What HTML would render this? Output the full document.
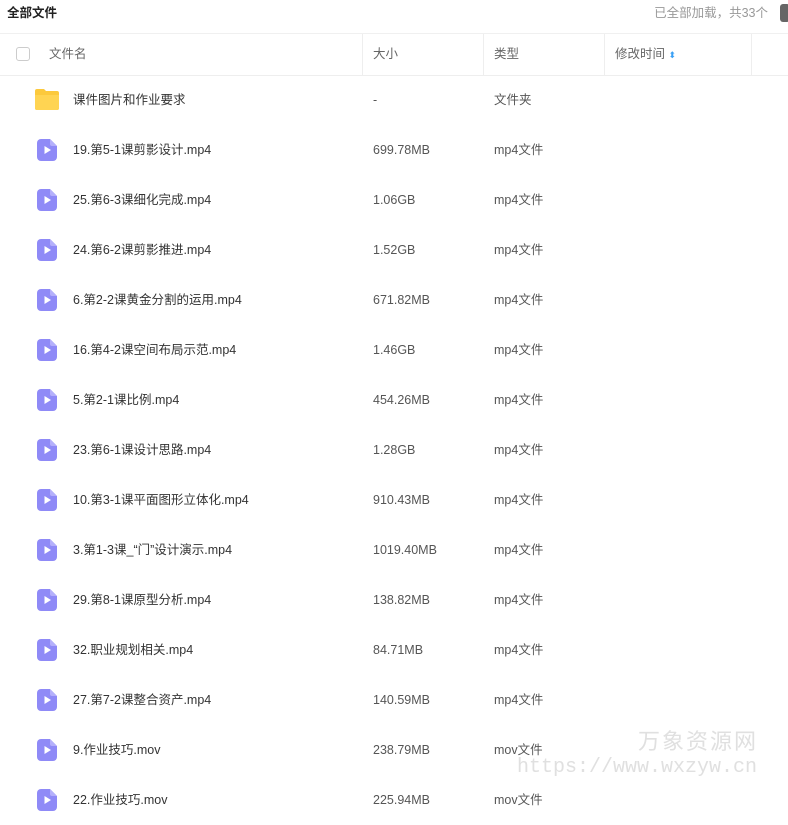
<!DOCTYPE html><html><head><meta charset="utf-8"><style>
body{margin:0;width:788px;height:802px;overflow:hidden;background:#fff;font-family:"Liberation Sans","Noto Sans CJK SC",sans-serif;font-size:12.5px;color:#333;position:relative}
.t{position:absolute;left:7px;top:0;line-height:27px;font-size:12.5px;font-weight:bold;color:#222}
.r{position:absolute;right:20px;top:0;line-height:27px;font-size:12.5px;color:#999}
.bar{position:absolute;left:780px;top:4px;width:10px;height:18px;background:#666;border-radius:3px}
.hd{position:absolute;left:0;top:33px;width:788px;height:41px;border-top:1px solid #f0f0f0;border-bottom:1px solid #eee}
.hd span{position:absolute;top:0;line-height:41px;color:#666}
.sep{position:absolute;top:0;width:1px;height:41px;background:#eee}
.cb{position:absolute;left:16px;top:13px;width:12px;height:12px;border:1px solid #ccc;border-radius:3px}
.row{position:absolute;left:0;width:788px;height:50px}
.row span{position:absolute;top:0;line-height:50px;color:#333}
.row span.g{color:#555}
.vi{position:absolute;left:37px;top:14px;width:20px;height:22px}
.wm1{position:absolute;left:638px;top:728px;font-size:22px;line-height:28px;color:#e0e0e0;letter-spacing:2px}
.wm2{position:absolute;left:517px;top:756px;font-size:20px;line-height:24px;color:#e0e0e0;font-family:"Liberation Mono",monospace}
</style></head><body>
<div class="t">全部文件</div><div class="r">已全部加载，共33个</div><div class="bar"></div>
<div class="hd"><div class="cb"></div><span style="left:49px">文件名</span>
<div class="sep" style="left:362px"></div><span style="left:373px">大小</span>
<div class="sep" style="left:483px"></div><span style="left:494px">类型</span>
<div class="sep" style="left:604px"></div><span style="left:615px">修改时间 <span style="position:static;color:#3aa0f5;font-size:9px;line-height:1">⬍</span></span>
<div class="sep" style="left:751px"></div></div>
<div class="row" style="top:75px"><svg class="vi" style="left:35px;top:13px;width:24px;height:22px" viewBox="0 0 24 22"><path d="M0 3a2 2 0 0 1 2-2h7l2 2h11a2 2 0 0 1 2 2v15a2 2 0 0 1-2 2H2a2 2 0 0 1-2-2z" fill="#fcc93c"/><path d="M0 7h24v13a2 2 0 0 1-2 2H2a2 2 0 0 1-2-2z" fill="#ffd452"/></svg><span style="left:73px">课件图片和作业要求</span><span class="g" style="left:373px">-</span><span class="g" style="left:494px">文件夹</span></div>
<div id="rows"></div>
<script>
var d=[["19.第5-1课剪影设计.mp4","699.78MB","mp4"],["25.第6-3课细化完成.mp4","1.06GB","mp4"],["24.第6-2课剪影推进.mp4","1.52GB","mp4"],["6.第2-2课黄金分割的运用.mp4","671.82MB","mp4"],["16.第4-2课空间布局示范.mp4","1.46GB","mp4"],["5.第2-1课比例.mp4","454.26MB","mp4"],["23.第6-1课设计思路.mp4","1.28GB","mp4"],["10.第3-1课平面图形立体化.mp4","910.43MB","mp4"],["3.第1-3课_“门”设计演示.mp4","1019.40MB","mp4"],["29.第8-1课原型分析.mp4","138.82MB","mp4"],["32.职业规划相关.mp4","84.71MB","mp4"],["27.第7-2课整合资产.mp4","140.59MB","mp4"],["9.作业技巧.mov","238.79MB","mov"],["22.作业技巧.mov","225.94MB","mov"]];
var h="";d.forEach(function(x,i){h+='<div class="row" style="top:'+(125+i*50)+'px"><svg class="vi" viewBox="0 0 20 22"><path d="M4 0h9l7 7v11a4 4 0 0 1-4 4H4a4 4 0 0 1-4-4V4a4 4 0 0 1 4-4z" fill="#8f8af7"/><path d="M13 0l7 7h-5a2 2 0 0 1-2-2z" fill="#b4b0fb"/><path d="M7.5 7v8l6.5-4z" fill="#fff"/></svg><span style="left:73px">'+x[0]+'</span><span class="g" style="left:373px">'+x[1]+'</span><span class="g" style="left:494px">'+x[2]+'文件</span></div>'});
document.getElementById("rows").innerHTML=h;
</script>
<div class="wm1">万象资源网</div><div class="wm2">https://www.wxzyw.cn</div>
</body></html>
